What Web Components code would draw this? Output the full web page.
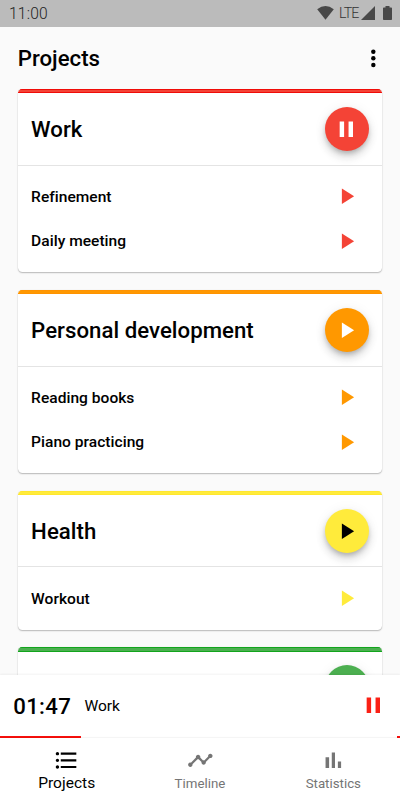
<!DOCTYPE html>
<html lang="en">
<head>
<meta charset="utf-8">
<meta name="viewport" content="width=device-width, initial-scale=1">
<title>Projects</title>
<style>
    body {
        margin: 0;
        background: #fafafa;
        color: #000;
        font-family: Roboto, sans-serif;
    }
</style>
</head>
<body>
<time-app>
    <status-bar slot="top" time="11:00" network="LTE"></status-bar>
    <app-header slot="top">Projects</app-header>

    <project-card name="Work" color="#f44336" edge="#f00c08" running>
        <task-row>Refinement</task-row>
        <task-row>Daily meeting</task-row>
    </project-card>
    <project-card name="Personal development" color="#ff9800" edge="#ff9300">
        <task-row>Reading books</task-row>
        <task-row>Piano practicing</task-row>
    </project-card>
    <project-card name="Health" color="#ffeb3b" edge="#ffe72d" icon-color="#000">
        <task-row>Workout</task-row>
    </project-card>
    <project-card name="" color="#4caf50" edge="#12a51c"></project-card>

    <active-timer slot="bottom" time="01:47">Work</active-timer>
    <bottom-nav slot="bottom">
        <nav-item icon="list" active>Projects</nav-item>
        <nav-item icon="timeline">Timeline</nav-item>
        <nav-item icon="chart">Statistics</nav-item>
    </bottom-nav>
</time-app>

<script>
const ICONS = {
    play: '<path d="M8 5v14l11-7z"/>',
    pause: '<path d="M6 19h4V5H6v14zm8-14v14h4V5h-4z"/>',
    more: '<circle cx="12" cy="6" r="2"/><circle cx="12" cy="12" r="2"/><circle cx="12" cy="18" r="2"/>',
    list: '<path d="M4 10.5c-.83 0-1.5.67-1.5 1.5s.67 1.5 1.5 1.5 1.5-.67 1.5-1.5-.67-1.5-1.5-1.5zm0-6c-.83 0-1.5.67-1.5 1.5S3.17 7.5 4 7.5 5.5 6.83 5.5 6 4.83 4.5 4 4.5zm0 12c-.83 0-1.5.68-1.5 1.5s.68 1.5 1.5 1.5 1.5-.68 1.5-1.5-.67-1.5-1.5-1.5zM7 19h14v-2H7v2zm0-6h14v-2H7v2zm0-8v2h14V5H7z"/>',
    timeline: '<path d="M23 8c0 1.1-.9 2-2 2-.18 0-.35-.02-.51-.07l-3.56 3.55c.05.16.07.34.07.52 0 1.1-.9 2-2 2s-2-.9-2-2c0-.18.02-.36.07-.52l-2.55-2.55c-.16.05-.34.07-.52.07s-.36-.02-.52-.07l-4.55 4.56c.05.16.07.33.07.51 0 1.1-.9 2-2 2s-2-.9-2-2 .9-2 2-2c.18 0 .35.02.51.07l4.56-4.55C8.02 9.36 8 9.18 8 9c0-1.1.9-2 2-2s2 .9 2 2c0 .18-.02.36-.07.52l2.55 2.55c.16-.05.34-.07.52-.07s.36.02.52.07l3.55-3.56C19.02 8.35 19 8.18 19 8c0-1.1.9-2 2-2s2 .9 2 2z"/>',
    chart: '<path d="M5 9.2h3.2V19H5zM10.6 5h2.9v14h-2.9zm5.5 8H19v6h-2.9z"/>'
};

function icon(name) {
    return `<svg viewBox="0 0 24 24" fill="currentColor">${ICONS[name]}</svg>`;
}

class TimeApp extends HTMLElement {
    constructor() {
        super();
        this.attachShadow({ mode: 'open' });
        this.shadowRoot.innerHTML = `
            <style>
                :host {
                    display: flex;
                    flex-direction: column;
                    height: 800px;
                    overflow: hidden;
                }
                main {
                    flex: 1;
                    min-height: 0;
                    overflow: hidden;
                    display: flex;
                    flex-direction: column;
                    gap: 17.8px;
                    padding: 0 17.8px;
                }
            </style>
            <slot name="top"></slot>
            <main><slot></slot></main>
            <slot name="bottom"></slot>
        `;
    }
}

class StatusBar extends HTMLElement {
    constructor() {
        super();
        this.attachShadow({ mode: 'open' });
        this.shadowRoot.innerHTML = `
            <style>
                :host {
                    display: flex;
                    flex: none;
                    align-items: center;
                    justify-content: space-between;
                    box-sizing: border-box;
                    height: 26.7px;
                    padding: 0 8.5px 0 9px;
                    background: #bbb;
                    color: #484848;
                    font-size: 15.6px;
                    font-weight: 300;
                }
                .time { letter-spacing: 0.2px; padding-top: 1px; color: #222; }
                .icons { display: flex; align-items: center; }
                .network { font-size: 14.2px; margin-left: 5px; letter-spacing: -0.9px; color: #333; }
                svg { display: block; fill: currentColor; }
            </style>
            <span class="time">${this.getAttribute('time')}</span>
            <div class="icons">
                <svg width="17" height="14" viewBox="0 0 17 14"><path d="M0.2 3.2Q8.5-3 16.8 3.2L8.5 13.8z"/></svg>
                <span class="network">${this.getAttribute('network')}</span>
                <svg width="14" height="14" viewBox="0 0 14 14" style="margin-left:2.5px"><path d="M14 0v14H0z"/></svg>
                <svg width="9" height="14" viewBox="0 0 9 14" style="margin-left:7.5px"><path d="M2.5 0h4v1.5h1.7q.8 0 .8.8v10.9q0 .8-.8.8H.8q-.8 0-.8-.8V2.3q0-.8.8-.8h1.7z"/></svg>
            </div>
        `;
    }
}

class AppHeader extends HTMLElement {
    constructor() {
        super();
        this.attachShadow({ mode: 'open' });
        this.shadowRoot.innerHTML = `
            <style>
                :host {
                    display: flex;
                    flex: none;
                    align-items: center;
                    justify-content: space-between;
                    box-sizing: border-box;
                    height: 62.3px;
                    padding: 0 13.5px 0 17.8px;
                    font-size: 22.2px;
                    font-weight: 500;
                }
                span { padding-top: 1px; }
                svg { width: 26.67px; height: 26.67px; }
            </style>
            <span><slot></slot></span>
            ${icon('more')}
        `;
    }
}

class ProjectCard extends HTMLElement {
    constructor() {
        super();
        this.attachShadow({ mode: 'open' });
        const color = this.getAttribute('color');
        const edge = this.getAttribute('edge');
        const iconColor = this.getAttribute('icon-color') || '#fff';
        this.shadowRoot.innerHTML = `
            <style>
                :host {
                    --task-color: ${color};
                    display: block;
                    flex: none;
                    overflow: hidden;
                    border-radius: 4.4px;
                    background: #fff;
                    box-shadow: 0 1px 1.5px rgba(0, 0, 0, 0.26), 0 0 1px rgba(0, 0, 0, 0.12);
                }
                .stripe {
                    box-sizing: border-box;
                    height: 4.4px;
                    background: ${color};
                    border: solid ${edge};
                    border-width: 1px 0;
                }
                .header {
                    display: flex;
                    align-items: center;
                    justify-content: space-between;
                    height: 71.2px;
                    padding: 0 13.3px;
                    border-bottom: 1px solid #e4e4e4;
                    font-size: 22.2px;
                    font-weight: 500;
                    letter-spacing: 0.04px;
                }
                .button {
                    display: flex;
                    align-items: center;
                    justify-content: center;
                    width: 44.4px;
                    height: 44.4px;
                    border-radius: 50%;
                    background: ${color};
                    color: ${iconColor};
                    box-shadow: 0 3px 5px -1px rgba(0, 0, 0, 0.2), 0 6px 10px rgba(0, 0, 0, 0.14), 0 1px 14px rgba(0, 0, 0, 0.06);
                }
                svg { width: 26.67px; height: 26.67px; }
                .tasks { padding: 8.9px 13.3px; }
            </style>
            <div class="stripe"></div>
            <div class="header">
                <span>${this.getAttribute('name')}</span>
                <div class="button">${icon(this.hasAttribute('running') ? 'pause' : 'play')}</div>
            </div>
            <div class="tasks"><slot></slot></div>
        `;
    }
}

class TaskRow extends HTMLElement {
    constructor() {
        super();
        this.attachShadow({ mode: 'open' });
        this.shadowRoot.innerHTML = `
            <style>
                :host {
                    display: flex;
                    align-items: center;
                    justify-content: space-between;
                    height: 44.4px;
                    padding-right: 9.1px;
                    font-size: 15.55px;
                    font-weight: 500;
                    letter-spacing: 0.02px;
                }
                svg { width: 26.67px; height: 26.67px; color: var(--task-color); }
            </style>
            <span><slot></slot></span>
            ${icon('play')}
        `;
    }
}

class ActiveTimer extends HTMLElement {
    constructor() {
        super();
        this.attachShadow({ mode: 'open' });
        this.shadowRoot.innerHTML = `
            <style>
                :host {
                    display: block;
                    flex: none;
                    position: relative;
                    background: #fff;
                    box-shadow: 0 -1px 2px rgba(0, 0, 0, 0.05);
                }
                .content {
                    display: flex;
                    align-items: center;
                    height: 60.4px;
                    padding: 0 13.3px;
                }
                .time {
                    font-size: 22.2px;
                    font-weight: 500;
                    letter-spacing: 0.3px;
                }
                .name {
                    flex: 1;
                    margin-left: 13.3px;
                    font-size: 15.55px;
                }
                svg { width: 26.67px; height: 26.67px; color: #fa2015; }
                .progress {
                    display: flex;
                    justify-content: space-between;
                    height: 2px;
                }
                .progress i { background: #f8100c; }
            </style>
            <div class="content">
                <span class="time">${this.getAttribute('time')}</span>
                <span class="name"><slot></slot></span>
                ${icon('pause')}
            </div>
            <div class="progress"><i style="width:81px"></i><i style="width:3.5px"></i></div>
        `;
    }
}

class BottomNav extends HTMLElement {
    constructor() {
        super();
        this.attachShadow({ mode: 'open' });
        this.shadowRoot.innerHTML = `
            <style>
                :host {
                    display: grid;
                    flex: none;
                    grid-template-columns: repeat(3, 1fr);
                    height: 62.2px;
                    position: relative;
                    background: #fff;
                    box-shadow: 0 -1px 1px rgba(0, 0, 0, 0.04);
                }
            </style>
            <slot></slot>
        `;
    }
}

class NavItem extends HTMLElement {
    constructor() {
        super();
        this.attachShadow({ mode: 'open' });
        this.shadowRoot.innerHTML = `
            <style>
                :host {
                    display: flex;
                    flex-direction: column;
                    align-items: center;
                    padding-top: 9px;
                    color: #757575;
                    font-size: 13.3px;
                }
                :host([active]) { color: #000; font-size: 15.55px; }
                svg { width: 26.67px; height: 26.67px; }
                span { line-height: 21px; }
            </style>
            ${icon(this.getAttribute('icon'))}
            <span><slot></slot></span>
        `;
    }
}

customElements.define('time-app', TimeApp);
customElements.define('status-bar', StatusBar);
customElements.define('app-header', AppHeader);
customElements.define('project-card', ProjectCard);
customElements.define('task-row', TaskRow);
customElements.define('active-timer', ActiveTimer);
customElements.define('bottom-nav', BottomNav);
customElements.define('nav-item', NavItem);
</script>
</body>
</html>
